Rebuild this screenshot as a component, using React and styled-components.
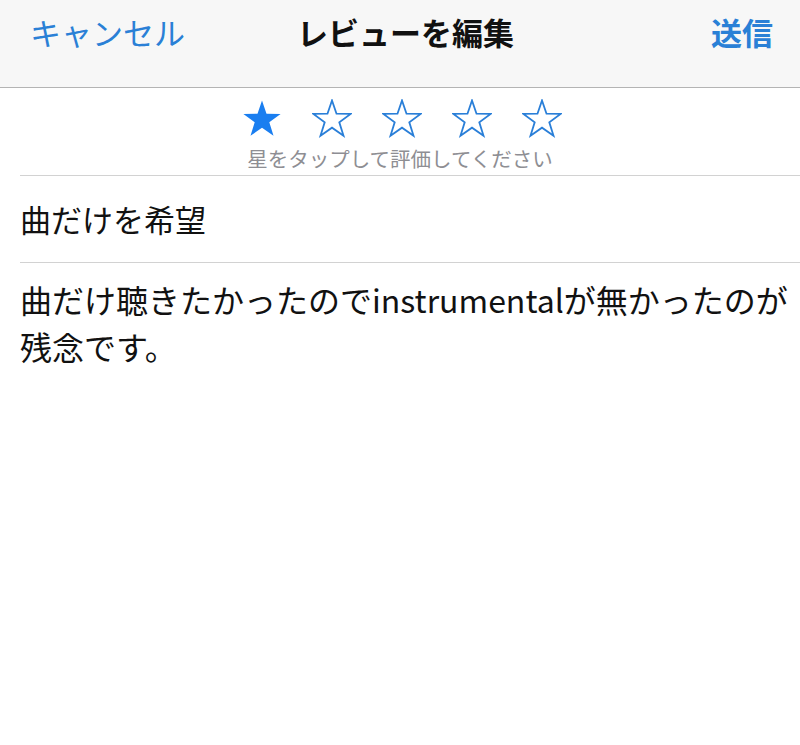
import styled, { createGlobalStyle } from 'styled-components';

const GlobalStyle = createGlobalStyle`
    html, body {
        margin: 0;
        padding: 0;
        background: #ffffff;
    }
    body {
        font-family: "Noto Sans CJK JP", "Noto Sans", sans-serif;
        color: #111111;
    }
`;

const STAR_POINTS = '20,1.5 24.5,14.7 38.6,14.9 27.3,23.3 31.5,36.8 20,28.7 8.5,36.8 12.7,23.3 1.4,14.9 15.5,14.7';

const Star = ({ filled }) => (
    <StarIcon viewBox="0 0 40 40" width="40" height="40">
        <polygon
            points={STAR_POINTS}
            fill={filled ? '#1a7ef0' : 'none'}
            stroke="#2a7fd8"
            strokeWidth={filled ? 0 : 1.8}
            strokeLinejoin="miter"
        />
    </StarIcon>
);

const App = () => {
    const rating = 1;

    return (
        <>
            <GlobalStyle />
            <Page>
                <NavBar>
                    <NavButton>キャンセル</NavButton>
                    <NavTitle>レビューを編集</NavTitle>
                    <NavButton bold right>送信</NavButton>
                </NavBar>
                <RatingBlock>
                    <StarRow>
                        {[1, 2, 3, 4, 5].map(n => (
                            <Star key={n} filled={n <= rating} />
                        ))}
                    </StarRow>
                    <Hint>星をタップして評価してください</Hint>
                </RatingBlock>
                <Field>
                    <ReviewTitle>曲だけを希望</ReviewTitle>
                </Field>
                <ReviewBody>
                    曲だけ聴きたかったのでinstrumentalが無かったのが残念です。
                </ReviewBody>
            </Page>
        </>
    );
};

export default App;

const Page = styled.div`
    width: 800px;
    min-height: 745px;
    background: #ffffff;
`;

const NavBar = styled.div`
    height: 88px;
    box-sizing: border-box;
    padding: 12px 27px 0 30px;
    display: grid;
    grid-template-columns: 1fr auto 1fr;
    align-items: start;
    background: #f7f7f7;
    border-bottom: 1px solid #b4b4b4;
`;

const NavButton = styled.span`
    font-size: 31px;
    line-height: 40px;
    color: #2a80d6;
    font-weight: ${props => props.bold ? 700 : 400};
    justify-self: ${props => props.right ? 'end' : 'start'};
`;

const NavTitle = styled.span`
    font-size: 31px;
    line-height: 40px;
    font-weight: 700;
    color: #111111;
    margin-left: 8px;
`;

const RatingBlock = styled.div`
    height: 87px;
    box-sizing: border-box;
    padding-top: 11px;
    display: flex;
    flex-direction: column;
    align-items: center;
`;

const StarRow = styled.div`
    display: flex;
    gap: 30px;
    margin-left: 4px;
`;

const StarIcon = styled.svg`
    display: block;
`;

const Hint = styled.div`
    margin-top: 7px;
    font-size: 20.5px;
    line-height: 24px;
    color: #8e8e93;
`;

const Field = styled.div`
    margin-left: 20px;
    height: 88px;
    box-sizing: border-box;
    border-top: 1px solid #d2d2d2;
    border-bottom: 1px solid #d2d2d2;
    display: flex;
    align-items: center;
`;

const ReviewTitle = styled.div`
    font-size: 31px;
    line-height: 40px;
`;

const ReviewBody = styled.div`
    padding: 13px 0 0 20px;
    font-size: 32px;
    line-height: 47px;
`;
